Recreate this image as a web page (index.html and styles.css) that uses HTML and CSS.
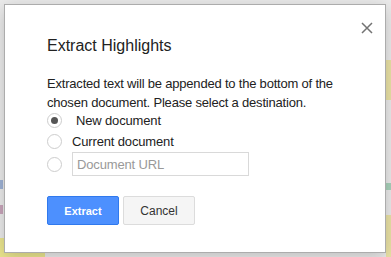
FILE: index.html
```html
<!DOCTYPE html>
<html lang="en">
<head>
  <meta charset="UTF-8">
  <meta name="viewport" content="width=device-width, initial-scale=1.0">
  <title>Extract Highlights</title>
  <link rel="stylesheet" href="styles.css">
</head>
<body>
  <!-- Document behind the dialog (only the edges show) -->
  <div class="page-behind">
    <span class="doc-mark mark-blue"></span>
    <span class="doc-mark mark-red"></span>
    <span class="doc-mark mark-yellow-left"></span>
    <span class="doc-mark mark-yellow-bottom"></span>
    <span class="doc-mark mark-yellow-right"></span>
    <span class="doc-mark mark-green-right"></span>
    <span class="doc-mark mark-yellow-right-low"></span>
  </div>

  <!-- Dialog -->
  <div class="modal" role="dialog" aria-labelledby="modal-title">
    <button class="modal-close" type="button" aria-label="Close">
      <svg width="12" height="12" viewBox="0 0 12 12">
        <path d="M1 1 L11 11 M11 1 L1 11" stroke="#737373" stroke-width="1.5" fill="none"/>
      </svg>
    </button>

    <h1 class="modal-title" id="modal-title">Extract Highlights</h1>
    <p class="modal-text">Extracted text will be appended to the bottom of the chosen document. Please select a destination.</p>

    <form class="dest-form">
      <div class="options">
        <label class="option">
          <input type="radio" name="dest" value="new" checked>
          <span class="option-label first">New document</span>
        </label>
        <label class="option">
          <input type="radio" name="dest" value="current">
          <span class="option-label">Current document</span>
        </label>
        <label class="option option-url">
          <input type="radio" name="dest" value="url">
          <input type="text" class="url-input" placeholder="Document URL">
        </label>
      </div>

      <div class="modal-buttons">
        <button type="submit" class="btn btn-primary">Extract</button>
        <button type="button" class="btn btn-default">Cancel</button>
      </div>
    </form>
  </div>
</body>
</html>
```

FILE: styles.css
```css
/* Page */
body {
  margin: 0;
  padding: 4px 5px 4px 4px;
  font-family: "Liberation Sans", Arial, sans-serif;
  background-color: #ebebeb;
  width: 391px;
  height: 257px;
  box-sizing: border-box;
  overflow: hidden;
  position: relative;
}

/* Bits of the document peeking out behind the dialog */
.page-behind {
  position: absolute;
  inset: 0;
}

.doc-mark {
  position: absolute;
  display: block;
}

.mark-blue { left: 0; top: 180px; width: 3px; height: 9px; background: #9fb3d6; }
.mark-red { left: 0; top: 205px; width: 3px; height: 9px; background: #c9a6bb; }
.mark-yellow-left { left: 0; top: 238px; width: 5px; height: 19px; background: #ebe68f; }
.mark-yellow-bottom { left: 0; bottom: 0; width: 45px; height: 4px; background: #ebe68f; }
.mark-yellow-right { right: 0; top: 60px; width: 5px; height: 40px; background: #ebe3a6; }
.mark-green-right { right: 0; top: 183px; width: 5px; height: 7px; background: #a9d3bb; }
.mark-yellow-right-low { right: 0; top: 215px; width: 5px; height: 42px; background: #ebe3a6; }

/* Dialog box */
.modal {
  position: relative;
  box-sizing: border-box;
  width: 382px;
  height: 249px;
  padding: 32px 30px 0 42px;
  background-color: #fff;
  border: 1px solid #acacac;
  box-shadow: 0 4px 16px rgba(0, 0, 0, 0.2);
}

.modal-close {
  position: absolute;
  top: 17px;
  right: 12px;
  width: 12px;
  height: 12px;
  padding: 0;
  border: none;
  background: none;
  cursor: pointer;
  display: flex;
}

.modal-title {
  margin: 0 0 19px;
  font-size: 16px;
  font-weight: normal;
  line-height: 18px;
  color: #222;
}

.modal-text {
  margin: 0;
  font-size: 13px;
  line-height: 19px;
  letter-spacing: -0.2px;
  color: #222;
}

/* Destination options */
.options {
  margin-top: -2px;
}

.option {
  display: flex;
  align-items: center;
  gap: 10px;
  height: 21px;
  font-size: 13px;
  letter-spacing: -0.15px;
  color: #222;
}

.option-label.first {
  padding-left: 4px;
}

.option input[type="radio"] {
  appearance: none;
  flex: none;
  margin: 0;
  width: 15px;
  height: 15px;
  border: 1px solid #cdcdcd;
  border-radius: 50%;
  background: #fff;
  display: flex;
  align-items: center;
  justify-content: center;
}

.option input[type="radio"]:checked::after {
  content: "";
  width: 7px;
  height: 7px;
  border-radius: 50%;
  background: #555;
}

.option-url {
  height: 24px;
}

.url-input {
  box-sizing: border-box;
  width: 177px;
  height: 24px;
  padding: 0 4px;
  border: 1px solid #d9d9d9;
  font-family: inherit;
  font-size: 13px;
  letter-spacing: -0.15px;
  color: #222;
}

.url-input::placeholder {
  color: #999;
}

/* Buttons */
.modal-buttons {
  display: flex;
  gap: 4px;
  margin-top: 20px;
}

.btn {
  box-sizing: border-box;
  width: 72px;
  height: 29px;
  border-radius: 2px;
  font-family: inherit;
  cursor: pointer;
}

.btn-primary {
  background-color: #4d90fe;
  border: 1px solid #3079ed;
  color: #fff;
  font-size: 11px;
  font-weight: bold;
}

.btn-default {
  background-color: #f5f5f5;
  border: 1px solid #dcdcdc;
  color: #333;
  font-size: 12px;
}
```
